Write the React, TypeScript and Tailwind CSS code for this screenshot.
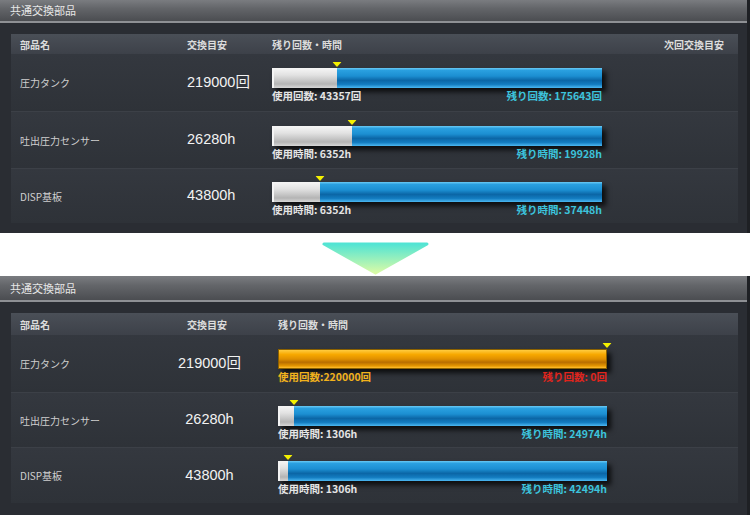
import React from "react";

type Variant = "blue" | "orange";
type Row = {
  name: string;
  target: string;
  frac: number;
  usedLabel: string;
  remainLabel: string;
  variant: Variant;
};

const topRows: Row[] = [
  { name: "圧力タンク", target: "219000回", frac: 43357 / 219000, usedLabel: "使用回数: 43357回", remainLabel: "残り回数: 175643回", variant: "blue" },
  { name: "吐出圧力センサー", target: "26280h", frac: 6352 / 26280, usedLabel: "使用時間: 6352h", remainLabel: "残り時間: 19928h", variant: "blue" },
  { name: "DISP基板", target: "43800h", frac: 6352 / 43800, usedLabel: "使用時間: 6352h", remainLabel: "残り時間: 37448h", variant: "blue" },
];

const bottomRows: Row[] = [
  { name: "圧力タンク", target: "219000回", frac: 1, usedLabel: "使用回数:220000回", remainLabel: "残り回数: 0回", variant: "orange" },
  { name: "吐出圧力センサー", target: "26280h", frac: 1306 / 26280, usedLabel: "使用時間: 1306h", remainLabel: "残り時間: 24974h", variant: "blue" },
  { name: "DISP基板", target: "43800h", frac: 1306 / 43800, usedLabel: "使用時間: 1306h", remainLabel: "残り時間: 42494h", variant: "blue" },
];

function Bar({ row, widthClass }: { row: Row; widthClass: string }) {
  const pct = `${Math.min(row.frac, 1) * 100}%`;
  const orange = row.variant === "orange";
  return (
    <div className={`flex flex-col ${widthClass}`}>
      <div className="relative h-[6px]">
        <svg
          className="absolute top-0 -translate-x-1/2"
          style={{ left: pct }}
          width="9"
          height="5"
          viewBox="0 0 9 5"
        >
          <polygon points="0,0 9,0 4.5,5" fill="#f4f000" />
        </svg>
      </div>
      {orange ? (
        <div className="h-[20px] border border-[#8a6000] bg-[linear-gradient(to_bottom,#ffcc40_0%,#f7a800_25%,#e09000_50%,#b86e00_68%,#e49600_88%,#ffbf30_100%)] shadow-[4px_4px_5px_rgba(0,0,0,0.75)]" />
      ) : (
        <div className="flex h-[20px] shadow-[4px_4px_5px_rgba(0,0,0,0.75)] bg-[linear-gradient(to_bottom,#6ccbf5_0%,#2aa0e0_12%,#1c8fd2_40%,#0b66a6_62%,#137cc0_82%,#4cb8f2_100%)]">
          <div
            className="h-full border-l-2 border-[#f4f4f4] bg-[linear-gradient(to_bottom,#f6f6f6_0%,#e2e2e2_35%,#c4c4c4_65%,#b4b4b4_80%,#d6d6d6_100%)]"
            style={{ width: pct }}
          />
        </div>
      )}
      <div className="flex justify-between text-[10.5px] font-bold leading-[14px] mt-[1px]">
        <span className={orange ? "text-[#f2b21c]" : "text-[#e4e4e4]"}>{row.usedLabel}</span>
        <span className={orange ? "text-[#e0241c]" : "text-[#3cc3dc]"}>{row.remainLabel}</span>
      </div>
    </div>
  );
}

function Panel({
  rows,
  bottom,
}: {
  rows: Row[];
  bottom: boolean;
}) {
  const rowHeights = bottom ? ["h-[57px]", "h-[55px]", "h-[56px]"] : ["h-[57px]", "h-[57px]", "h-[55px]"];
  return (
    <div className="flex flex-col bg-[#2a2d33] border-r-[3px] border-[#1e2024]">
      <div
        className={`${bottom ? "h-[24px]" : "h-[21px]"} flex items-center pl-[10px] bg-[linear-gradient(to_bottom,#7a7c80_0%,#636569_40%,#4b4d51_100%)] text-[11px] text-[#e6e6e6]`}
      >
        共通交換部品
      </div>
      <div className="h-[2px] bg-[#8e9094]" />
      <div className={`pl-[11px] pr-[9px] pt-[11px] ${bottom ? "pb-[12px]" : "pb-[10px]"}`}>
        <div className="flex flex-col bg-[#32363d]">
          <div
            className={`${bottom ? "h-[22px]" : "h-[20px]"} flex items-center pl-[9px] bg-[linear-gradient(to_bottom,#4a4f57_0%,#3d4149_100%)] text-[10px] font-bold text-[#dcdcdc]`}
          >
            <div className="w-[167px]">部品名</div>
            <div className={bottom ? "w-[91px]" : "w-[85px]"}>交換目安</div>
            <div className="flex-1">残り回数・時間</div>
            {!bottom && <div className="w-[74px]">次回交換目安</div>}
          </div>
          {rows.map((row, i) => (
            <div
              key={i}
              className={`${rowHeights[i]} flex items-center pl-[9px] ${i > 0 ? "border-t border-[#3c4047]" : ""} bg-[linear-gradient(to_bottom,#34383f_0%,#2e3238_100%)]`}
            >
              <div className={`${bottom ? "w-[147px]" : "w-[167px]"} text-[10px] text-[#cfcfcf]`}>{row.name}</div>
              <div
                className={`${bottom ? "w-[85px] text-center mr-[26px]" : "w-[85px]"} font-['Liberation_Sans','Noto_Sans_CJK_JP',sans-serif] text-[14.5px] text-[#f2f2f2]`}
              >
                {row.target}
              </div>
              <Bar row={row} widthClass={bottom ? "w-[329px]" : "w-[330px]"} />
            </div>
          ))}
        </div>
      </div>
    </div>
  );
}

export default function App() {
  return (
    <div className="w-[750px] h-[515px] bg-white flex flex-col overflow-hidden font-['Noto_Sans_CJK_JP','Noto_Sans',sans-serif]">
      <Panel rows={topRows} bottom={false} />
      <div className="h-[44px] flex justify-center pt-[9px] pl-[1px]">
        <svg width="111" height="33" viewBox="0 0 111 33">
          <defs>
            <linearGradient id="arrowGrad" x1="0" y1="0" x2="0" y2="1">
              <stop offset="0%" stopColor="#52e4d4" />
              <stop offset="100%" stopColor="#dafba6" />
            </linearGradient>
          </defs>
          <path
            d="M4 2 L107 2 L55.5 31 Z"
            fill="url(#arrowGrad)"
            stroke="url(#arrowGrad)"
            strokeWidth="3"
            strokeLinejoin="round"
          />
        </svg>
      </div>
      <Panel rows={bottomRows} bottom={true} />
    </div>
  );
}
